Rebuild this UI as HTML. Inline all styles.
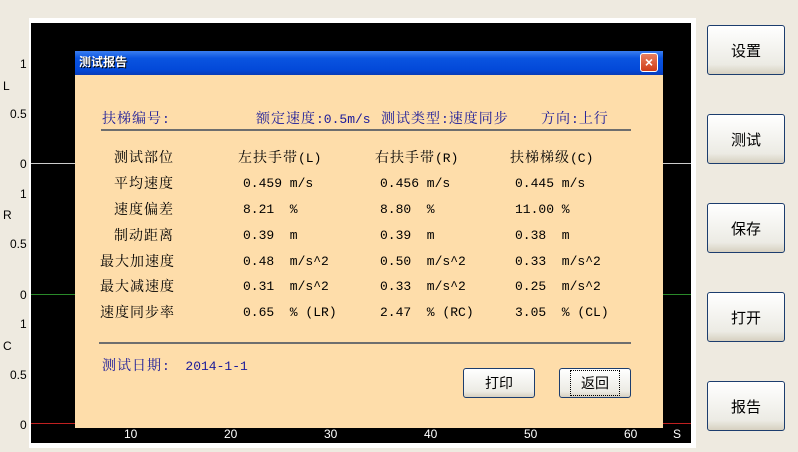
<!DOCTYPE html>
<html><head><meta charset="utf-8"><style>
body{margin:0;width:798px;height:452px;background:#EEEAE0;position:relative;overflow:hidden;font-family:"Liberation Sans","Noto Sans CJK SC",sans-serif}
.a{position:absolute;white-space:pre;line-height:1}
.ax{font-size:12px;color:#000}
.xl{font-size:12px;color:#fff}
.cn{font-family:"Noto Serif CJK SC","Noto Sans CJK SC",serif;font-size:14px;color:#000;letter-spacing:1px}
.cn span,.m{font-family:"Liberation Mono",monospace;font-size:13px;letter-spacing:0}
.bl{color:#1a1a9a}
.btn{position:absolute;width:78px;height:50px;border:1px solid #1c3d6e;border-radius:3px;background:linear-gradient(#fff,#ecebe4 80%,#d6d0c0);box-sizing:border-box;font-family:"Noto Sans CJK SC",sans-serif;font-size:15px;display:flex;align-items:center;justify-content:center;color:#000}
.b2{position:absolute;height:30px;width:72px;border:1px solid #1c3d6e;border-radius:3px;background:linear-gradient(#fff,#ecebe4 80%,#d6d0c0);box-sizing:border-box;font-family:"Noto Sans CJK SC",sans-serif;font-size:14px;display:flex;align-items:center;justify-content:center}
</style></head><body>
<div style="position:absolute;left:29px;top:18px;width:667px;height:430px;background:#fff"></div>
<div style="position:absolute;left:31px;top:23px;width:660px;height:420px;background:#000"></div>
<div style="position:absolute;left:31px;top:163px;width:660px;height:1px;background:#ccc"></div>
<div style="position:absolute;left:31px;top:294px;width:660px;height:1px;background:#2a8a2a"></div>
<div style="position:absolute;left:31px;top:423px;width:660px;height:1px;background:#c02020"></div>
<div class="a ax" style="left:20px;top:58px">1</div>
<div class="a ax" style="left:3px;top:80px">L</div>
<div class="a ax" style="left:10px;top:108px">0.5</div>
<div class="a ax" style="left:20px;top:158px">0</div>
<div class="a ax" style="left:20px;top:188px">1</div>
<div class="a ax" style="left:3px;top:209px">R</div>
<div class="a ax" style="left:10px;top:238px">0.5</div>
<div class="a ax" style="left:20px;top:289px">0</div>
<div class="a ax" style="left:20px;top:318px">1</div>
<div class="a ax" style="left:3px;top:340px">C</div>
<div class="a ax" style="left:10px;top:369px">0.5</div>
<div class="a ax" style="left:20px;top:419px">0</div>
<div class="a xl" style="left:124px;top:428px">10</div>
<div class="a xl" style="left:224px;top:428px">20</div>
<div class="a xl" style="left:324px;top:428px">30</div>
<div class="a xl" style="left:424px;top:428px">40</div>
<div class="a xl" style="left:524px;top:428px">50</div>
<div class="a xl" style="left:624px;top:428px">60</div>
<div class="a xl" style="left:673px;top:428px">S</div>

<div style="position:absolute;left:75px;top:51px;width:588px;height:377px;background:#FEDDAA"></div>
<div style="position:absolute;left:75px;top:51px;width:588px;height:24px;background:linear-gradient(#3a7ef0,#0a54e0 30%,#0348d8 80%,#0a3cb8)"></div>
<div class="a" style="left:79px;top:56px;font-family:'Noto Sans CJK SC',sans-serif;font-weight:bold;font-size:12px;color:#fff;text-shadow:1px 1px 0 #000">测试报告</div>
<div style="position:absolute;left:640px;top:53px;width:18px;height:19px;border:1px solid #fff;border-radius:3px;background:linear-gradient(#e88060,#d03c18);box-sizing:border-box;color:#fff;font-size:14px;font-weight:bold;text-align:center;line-height:16px">×</div>

<div class="a cn bl" style="left:102px;top:111px">扶梯编号<span>:</span></div>
<div class="a cn bl" style="left:256px;top:111px">额定速度<span>:0.5m/s</span></div>
<div class="a cn bl" style="left:381px;top:111px">测试类型<span>:</span>速度同步</div>
<div class="a cn bl" style="left:541px;top:111px">方向<span>:</span>上行</div>
<div style="position:absolute;left:101px;top:129px;width:530px;height:2px;background:#6e6e6e"></div>

<div class="a cn" style="left:114px;top:150px">测试部位</div>
<div class="a cn" style="left:238px;top:150px">左扶手带<span>(L)</span></div>
<div class="a cn" style="left:375px;top:150px">右扶手带<span>(R)</span></div>
<div class="a cn" style="left:510px;top:150px">扶梯梯级<span>(C)</span></div>

<div class="a cn" style="left:114px;top:176px">平均速度</div>
<div class="a m" style="left:243px;top:177px">0.459 m/s</div>
<div class="a m" style="left:380px;top:177px">0.456 m/s</div>
<div class="a m" style="left:515px;top:177px">0.445 m/s</div>

<div class="a cn" style="left:114px;top:202px">速度偏差</div>
<div class="a m" style="left:243px;top:203px">8.21  %</div>
<div class="a m" style="left:380px;top:203px">8.80  %</div>
<div class="a m" style="left:515px;top:203px">11.00 %</div>

<div class="a cn" style="left:114px;top:228px">制动距离</div>
<div class="a m" style="left:243px;top:229px">0.39  m</div>
<div class="a m" style="left:380px;top:229px">0.39  m</div>
<div class="a m" style="left:515px;top:229px">0.38  m</div>

<div class="a cn" style="left:100px;top:254px">最大加速度</div>
<div class="a m" style="left:243px;top:255px">0.48  m/s^2</div>
<div class="a m" style="left:380px;top:255px">0.50  m/s^2</div>
<div class="a m" style="left:515px;top:255px">0.33  m/s^2</div>

<div class="a cn" style="left:100px;top:279px">最大减速度</div>
<div class="a m" style="left:243px;top:280px">0.31  m/s^2</div>
<div class="a m" style="left:380px;top:280px">0.33  m/s^2</div>
<div class="a m" style="left:515px;top:280px">0.25  m/s^2</div>

<div class="a cn" style="left:100px;top:305px">速度同步率</div>
<div class="a m" style="left:243px;top:306px">0.65  % (LR)</div>
<div class="a m" style="left:380px;top:306px">2.47  % (RC)</div>
<div class="a m" style="left:515px;top:306px">3.05  % (CL)</div>

<div style="position:absolute;left:99px;top:342px;width:532px;height:2px;background:#6e6e6e"></div>
<div class="a cn bl" style="left:102px;top:358px">测试日期<span>:  2014-1-1</span></div>

<div class="b2" style="left:463px;top:368px">打印</div>
<div class="b2" style="left:559px;top:368px"><span style="border:1px dotted #000;padding:2px 10px">返回</span></div>

<div class="btn" style="left:707px;top:25px">设置</div>
<div class="btn" style="left:707px;top:114px">测试</div>
<div class="btn" style="left:707px;top:203px">保存</div>
<div class="btn" style="left:707px;top:292px">打开</div>
<div class="btn" style="left:707px;top:381px">报告</div>
</body></html>
